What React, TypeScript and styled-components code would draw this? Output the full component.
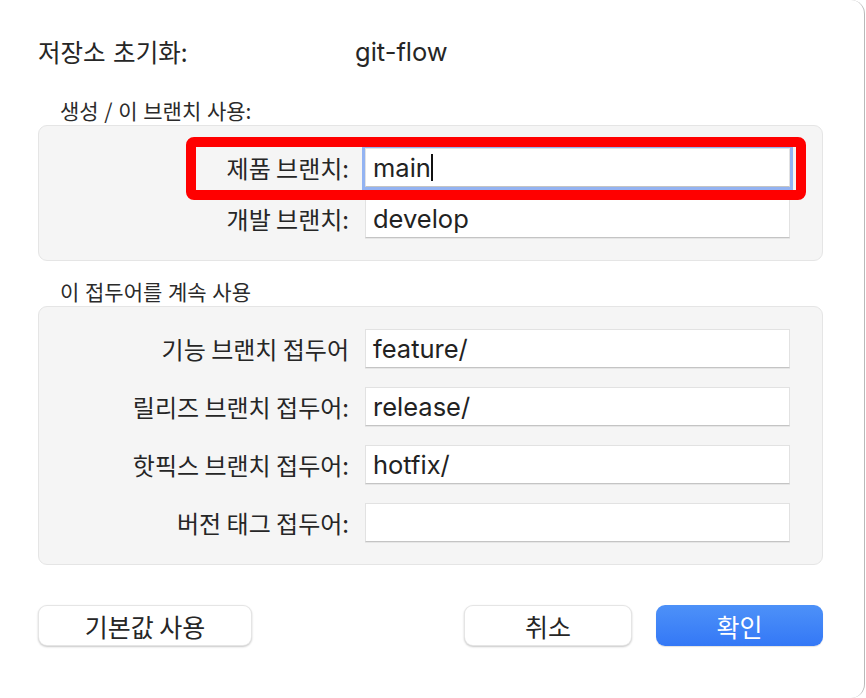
import React from "react";
import styled, { createGlobalStyle } from "styled-components";

const GlobalStyle = createGlobalStyle`
  html, body { margin: 0; padding: 0; background: #ffffff; }
  body {
    font-family: Inter, "Noto Sans CJK KR", "Noto Sans", sans-serif;
    color: #262626;
    -webkit-font-smoothing: antialiased;
  }
  * { box-sizing: border-box; }
`;

const Window = styled.div`
  width: 865px;
  height: 698px;
  background: #ffffff;
  border-right: 1px solid #b9b9b9;
  border-radius: 0 14px 14px 0;
  padding: 37px 41px 0 38px;
  display: flex;
  flex-direction: column;
`;

const TitleRow = styled.div`
  display: grid;
  grid-template-columns: 317px 1fr;
  height: 30px;
  align-items: center;
  line-height: 30px;
`;

const TitleLabel = styled.div`
  font-family: "Noto Sans CJK KR", sans-serif;
  font-size: 24.5px;
  word-spacing: 2px;
`;

const TitleValue = styled.div`
  font-family: Inter, "Noto Sans CJK KR", sans-serif;
  font-size: 25.5px;
`;

const SectionLabel = styled.div<{ $top: number }>`
  margin-top: ${(p) => p.$top}px;
  margin-bottom: 3px;
  padding-left: 22px;
  font-family: "Noto Sans CJK KR", sans-serif;
  font-size: 21px;
  line-height: 24px;
  height: 24px;
  word-spacing: 1px;
  color: #2b2b2b;
  white-space: nowrap;
`;

const Group = styled.div<{ $gap: number }>`
  position: relative;
  background: #f5f5f5;
  border: 1px solid #e5e5e5;
  border-radius: 9px;
  padding: 22px 32px 22px 0;
  display: grid;
  grid-template-columns: 310px 1fr;
  column-gap: 16px;
  row-gap: ${(p) => p.$gap}px;
  align-items: center;
`;

const Label = styled.div`
  text-align: right;
  font-family: "Noto Sans CJK KR", sans-serif;
  font-size: 24px;
  line-height: 39px;
  color: #262626;
  white-space: nowrap;
`;

const Field = styled.div<{ $focused?: boolean }>`
  height: 39px;
  background: #ffffff;
  border: 1px solid #e2e2e2;
  border-bottom-color: #c4c4c4;
  box-shadow: ${(p) =>
    p.$focused ? "0 0 0 3px #93b3f2" : "0 1px 0 rgba(0,0,0,0.06)"};
  padding-left: 7px;
  display: flex;
  align-items: center;
  font-family: Inter, "Noto Sans CJK KR", sans-serif;
  font-size: 25.5px;
  color: #222222;
  white-space: nowrap;
`;

const Caret = styled.span`
  display: inline-block;
  width: 2px;
  height: 27px;
  background: #111111;
`;

const Highlight = styled.div`
  position: absolute;
  left: 147px;
  top: 11px;
  width: 620px;
  height: 63px;
  border: 10px solid #ff0000;
  border-radius: 8px;
  pointer-events: none;
`;

const ButtonRow = styled.div`
  margin-top: 40px;
  display: flex;
  align-items: center;
  gap: 24px;
`;

const Spacer = styled.div`
  flex: 1;
`;

const Button = styled.button<{ $width: number; $primary?: boolean }>`
  width: ${(p) => p.$width}px;
  height: 41px;
  border-radius: 9px;
  border: ${(p) => (p.$primary ? "none" : "1px solid rgba(0,0,0,0.1)")};
  background: ${(p) =>
    p.$primary ? "linear-gradient(#4d91f8, #3478f6)" : "#ffffff"};
  color: ${(p) => (p.$primary ? "#ffffff" : "#262626")};
  box-shadow: ${(p) =>
    p.$primary
      ? "0 1px 1px rgba(0,0,0,0.12)"
      : "0 1px 2px rgba(0,0,0,0.22)"};
  font-family: "Noto Sans CJK KR", sans-serif;
  font-size: 25px;
  padding: 0;
  cursor: default;
`;

const branchRows = [
  { label: "기능 브랜치 접두어", value: "feature/" },
  { label: "릴리즈 브랜치 접두어:", value: "release/" },
  { label: "핫픽스 브랜치 접두어:", value: "hotfix/" },
  { label: "버전 태그 접두어:", value: "" },
];

export default function App() {
  return (
    <>
      <GlobalStyle />
      <Window>
        <TitleRow>
          <TitleLabel>저장소 초기화:</TitleLabel>
          <TitleValue>git-flow</TitleValue>
        </TitleRow>

        <SectionLabel $top={31}>생성 / 이 브랜치 사용:</SectionLabel>
        <Group $gap={12}>
          <Label>제품 브랜치:</Label>
          <Field $focused>
            main
            <Caret />
          </Field>
          <Label>개발 브랜치:</Label>
          <Field>develop</Field>
          <Highlight />
        </Group>

        <SectionLabel $top={18}>이 접두어를 계속 사용</SectionLabel>
        <Group $gap={19}>
          {branchRows.map((r) => (
            <React.Fragment key={r.label}>
              <Label>{r.label}</Label>
              <Field>{r.value}</Field>
            </React.Fragment>
          ))}
        </Group>

        <ButtonRow>
          <Button $width={214}>기본값 사용</Button>
          <Spacer />
          <Button $width={168}>취소</Button>
          <Button $width={167} $primary>
            확인
          </Button>
        </ButtonRow>
      </Window>
    </>
  );
}
